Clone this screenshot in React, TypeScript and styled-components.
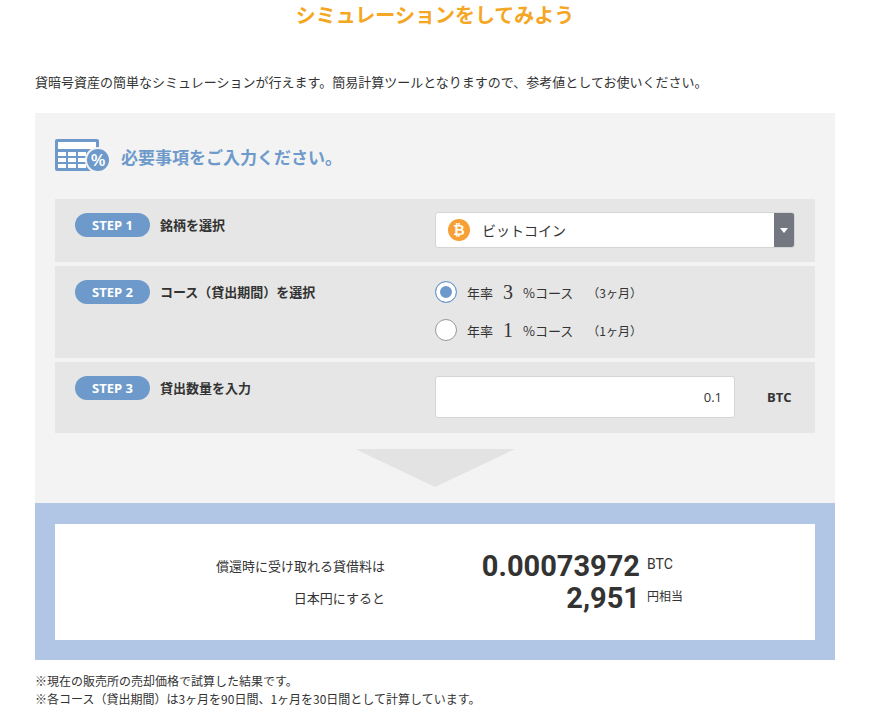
import styled, { createGlobalStyle } from 'styled-components';

const Global = createGlobalStyle`
  body { margin: 0; background: #fff; font-family: "Noto Sans CJK JP", "Noto Sans", sans-serif; color: #333; }
`;

const Page = styled.div`
  width: 800px;
  margin: 0 auto;
  padding-left: 0;
  transform: translateX(0);
`;

const Title = styled.h2`
  margin: 0;
  padding-top: 2px;
  text-align: center;
  color: #f5a623;
  font-size: 20px;
  font-weight: 700;
  line-height: 26px;
`;

const Intro = styled.p`
  margin: 44px 0 21px;
  font-size: 13px;
  line-height: 20px;
`;

const Panel = styled.div`
  background: #f3f3f3;
  padding: 26px 20px 16px;
`;

const Heading = styled.div`
  display: flex;
  align-items: center;
  gap: 10px;
  color: #6e9acb;
  font-size: 17px;
  font-weight: 700;
  margin-bottom: 26px;
`;

const Rows = styled.div`
  display: flex;
  flex-direction: column;
  gap: 4px;
`;

const Row = styled.div<{ $h: number }>`
  display: flex;
  background: #e6e6e6;
  height: ${p => p.$h}px;
  padding: 14px 20px 0;
  box-sizing: border-box;
`;

const Left = styled.div`
  width: 360px;
  display: flex;
  align-items: flex-start;
  gap: 10px;
  font-size: 13px;
  font-weight: 700;
  line-height: 24px;
`;

const Badge = styled.span`
  background: #6e9acb;
  color: #fff;
  border-radius: 12px;
  width: 75px;
  height: 24px;
  text-align: center;
  font-family: "Open Sans", sans-serif;
  font-weight: 700;
  font-size: 13px;
`;

const Select = styled.div`
  width: 360px;
  height: 36px;
  background: #fff;
  border: 1px solid #d5d5d5;
  border-radius: 3px;
  box-sizing: border-box;
  display: flex;
  align-items: center;
  padding-left: 12px;
  gap: 12px;
  font-size: 14px;
  overflow: hidden;
  margin-top: -1px;
`;

const Arrow = styled.div`
  margin-left: auto;
  width: 20px;
  height: 100%;
  background: #737880;
  display: flex;
  align-items: center;
  justify-content: center;
  &::after {
    content: "";
    border: 4px solid transparent;
    border-top: 5px solid #fff;
    border-bottom: 0;
  }
`;

const Radios = styled.div`
  display: flex;
  flex-direction: column;
  gap: 14px;
`;

const Radio = styled.label<{ $on?: boolean }>`
  display: flex;
  align-items: center;
  gap: 10px;
  font-size: 13px;
  height: 24px;
  &::before {
    content: "";
    width: 20px;
    height: 20px;
    border-radius: 50%;
    background: ${p => (p.$on ? '#6e9acb' : '#fff')};
    border: 1px solid ${p => (p.$on ? '#6e9acb' : '#999')};
    box-shadow: ${p => (p.$on ? 'inset 0 0 0 4px #fff' : 'none')};
  }
  b { font-family: "Liberation Serif", serif; font-size: 20px; font-weight: 400; }
  small { font-size: 12px; margin-left: 4px; }
`;

const Input = styled.div`
  width: 300px;
  height: 42px;
  background: #fff;
  border: 1px solid #d5d5d5;
  border-radius: 3px;
  box-sizing: border-box;
  display: flex;
  align-items: center;
  justify-content: flex-end;
  padding-right: 12px;
  font-size: 13px;
  font-family: "Open Sans", sans-serif;
`;

const Unit = styled.span`
  margin-left: 32px;
  line-height: 42px;
  font-weight: 700;
  font-size: 13px;
  font-family: "Open Sans", sans-serif;
`;

const Down = styled.div`
  margin: 16px auto 0;
  width: 0;
  height: 0;
  border-left: 80px solid transparent;
  border-right: 80px solid transparent;
  border-top: 38px solid #e3e3e3;
`;

const Band = styled.div`
  background: #b0c6e4;
  padding: 21px 20px 20px;
`;

const Result = styled.div`
  background: #fff;
  height: 116px;
  display: grid;
  grid-template-columns: 330px 255px 1fr;
  align-content: center;
  row-gap: 0;
`;

const Label = styled.div`
  text-align: right;
  font-size: 13px;
  line-height: 32px;
`;

const Num = styled.div`
  text-align: right;
  font-family: Roboto, sans-serif;
  font-weight: 700;
  font-size: 29px;
  line-height: 32px;
  color: #333;
`;

const Sm = styled.div<{ $f?: string }>`
  padding-left: 7px;
  font-size: 14px;
  line-height: 28px;
  font-family: ${p => p.$f || 'inherit'};
`;

const Notes = styled.p`
  margin: 12px 0 0;
  font-size: 12px;
  line-height: 18px;
`;

const CalcIcon = () => (
  <svg width="56" height="34" viewBox="0 0 56 34">
    <rect x="0" y="0" width="44" height="32" rx="2" fill="#6e9acb" />
    <rect x="3" y="3" width="38" height="7" fill="#fff" />
    <g fill="#fff">
      {[0, 1, 2, 3].map(c =>
        [0, 1, 2].map(r => <rect key={c + '-' + r} x={3 + c * 10} y={13 + r * 6} width="8" height="4" />)
      )}
    </g>
    <circle cx="43" cy="21" r="13" fill="#f3f3f3" />
    <circle cx="43" cy="21" r="11" fill="#6e9acb" />
    <text x="43" y="27" textAnchor="middle" fill="#fff" fontSize="16" fontWeight="700" fontFamily="Liberation Sans">%</text>
  </svg>
);

const BtcIcon = () => (
  <svg width="22" height="22" viewBox="0 0 22 22">
    <circle cx="11" cy="11" r="11" fill="#f7a035" />
    <text x="11" y="16" textAnchor="middle" fill="#fff" fontSize="14" fontWeight="700" fontFamily="Liberation Sans">₿</text>
  </svg>
);

export default function App() {
  return (
    <>
      <Global />
      <Page>
        <Title>シミュレーションをしてみよう</Title>
        <Intro>貸暗号資産の簡単なシミュレーションが行えます。簡易計算ツールとなりますので、参考値としてお使いください。</Intro>
        <Panel>
          <Heading>
            <CalcIcon />
            必要事項をご入力ください。
          </Heading>
          <Rows>
            <Row $h={63}>
              <Left><Badge>STEP 1</Badge>銘柄を選択</Left>
              <Select><BtcIcon />ビットコイン<Arrow /></Select>
            </Row>
            <Row $h={92}>
              <Left><Badge>STEP 2</Badge>コース（貸出期間）を選択</Left>
              <Radios>
                <Radio $on>年率 <b>3</b>%コース<small>（3ヶ月）</small></Radio>
                <Radio>年率 <b>1</b>%コース<small>（1ヶ月）</small></Radio>
              </Radios>
            </Row>
            <Row $h={71}>
              <Left><Badge>STEP 3</Badge>貸出数量を入力</Left>
              <Input>0.1</Input>
              <Unit>BTC</Unit>
            </Row>
          </Rows>
          <Down />
        </Panel>
        <Band>
          <Result>
            <Label>償還時に受け取れる貸借料は</Label>
            <Num>0.00073972</Num>
            <Sm $f="Roboto, sans-serif">BTC</Sm>
            <Label>日本円にすると</Label>
            <Num>2,951</Num>
            <Sm style={{ fontSize: 12 }}>円相当</Sm>
          </Result>
        </Band>
        <Notes>
          ※現在の販売所の売却価格で試算した結果です。<br />
          ※各コース（貸出期間）は3ヶ月を90日間、1ヶ月を30日間として計算しています。
        </Notes>
      </Page>
    </>
  );
}
